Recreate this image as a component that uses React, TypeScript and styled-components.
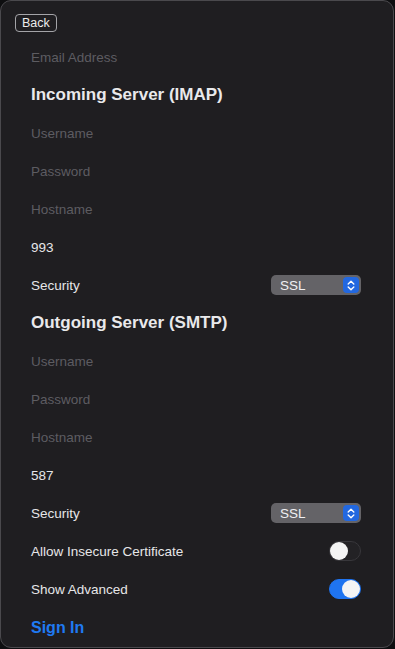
import React, { useState } from 'react'
import styled, { createGlobalStyle } from 'styled-components';

const GlobalStyle = createGlobalStyle`
    html, body {
        margin: 0;
        padding: 0;
        background: #0e0e10;
    }
    body {
        font-family: "Liberation Sans", Arial, sans-serif;
        -webkit-font-smoothing: antialiased;
    }
`;

type SecurityProps = { value: string };

const SecuritySelect: React.FC<SecurityProps> = ({ value }) => (
    <Select>
        <SelectValue>{value}</SelectValue>
        <Chevron>
            <svg width="8" height="11" viewBox="0 0 8 11" fill="none">
                <path d="M1.2 4 L4 1.3 L6.8 4" stroke="#fff" strokeWidth="1.4" strokeLinecap="round" strokeLinejoin="round" />
                <path d="M1.2 7 L4 9.7 L6.8 7" stroke="#fff" strokeWidth="1.4" strokeLinecap="round" strokeLinejoin="round" />
            </svg>
        </Chevron>
    </Select>
);

const Toggle: React.FC<{ on: boolean; onClick: () => void }> = ({ on, onClick }) => (
    <Track $on={on} onClick={onClick}>
        <Knob $on={on} />
    </Track>
);

const App: React.FC<{}> = () => {
    const [insecure, setInsecure] = useState(false);
    const [advanced, setAdvanced] = useState(true);

    return (
        <>
            <GlobalStyle />
            <Window>
                <TopBar>
                    <BackButton>Back</BackButton>
                </TopBar>
                <Row><Placeholder>Email Address</Placeholder></Row>
                <Row><Heading>Incoming Server (IMAP)</Heading></Row>
                <Row><Placeholder>Username</Placeholder></Row>
                <Row><Placeholder>Password</Placeholder></Row>
                <Row><Placeholder>Hostname</Placeholder></Row>
                <Row><Label>993</Label></Row>
                <Row>
                    <Label>Security</Label>
                    <SecuritySelect value="SSL" />
                </Row>
                <Row><Heading>Outgoing Server (SMTP)</Heading></Row>
                <Row><Placeholder>Username</Placeholder></Row>
                <Row><Placeholder>Password</Placeholder></Row>
                <Row><Placeholder>Hostname</Placeholder></Row>
                <Row><Label>587</Label></Row>
                <Row>
                    <Label>Security</Label>
                    <SecuritySelect value="SSL" />
                </Row>
                <Row>
                    <Label>Allow Insecure Certificate</Label>
                    <Toggle on={insecure} onClick={() => setInsecure(!insecure)} />
                </Row>
                <Row>
                    <Label>Show Advanced</Label>
                    <Toggle on={advanced} onClick={() => setAdvanced(!advanced)} />
                </Row>
                <Row><SignIn>Sign In</SignIn></Row>
            </Window>
        </>
    )
}

const Window = styled.div`
    box-sizing: border-box;
    width: 394px;
    height: 648px;
    background: #1f1e21;
    border: 1px solid #4a494d;
    border-radius: 11px;
    display: flex;
    flex-direction: column;
    overflow: hidden;
`;
const TopBar = styled.div`
    height: 37px;
    flex-shrink: 0;
    display: flex;
    align-items: flex-start;
    padding: 13px 0 0 14px;
    box-sizing: border-box;
`;
const BackButton = styled.button`
    box-sizing: border-box;
    height: 18px;
    padding: 0 6px;
    background: transparent;
    color: #ececec;
    border: 1px solid #a4a4a8;
    border-radius: 4px;
    font-family: "Liberation Sans", Arial, sans-serif;
    font-size: 12.5px;
    line-height: 16px;
    cursor: pointer;
`;
const Row = styled.div`
    height: 38px;
    flex-shrink: 0;
    display: flex;
    align-items: center;
    justify-content: space-between;
    padding: 0 32px 0 30px;
`;
const Placeholder = styled.div`
    font-size: 13.5px;
    color: #5d5c61;
`;
const Label = styled.div`
    font-size: 13.5px;
    color: #e6e6e8;
`;
const Heading = styled.div`
    font-size: 17px;
    font-weight: bold;
    color: #e9e9eb;
`;
const SignIn = styled.div`
    font-size: 16px;
    font-weight: bold;
    color: #1f7af2;
    padding-top: 1px;
`;
const Select = styled.div`
    box-sizing: border-box;
    width: 90px;
    height: 20px;
    background: #646367;
    border-radius: 5px;
    display: flex;
    align-items: center;
    justify-content: space-between;
    padding: 0 2px 0 9px;
`;
const SelectValue = styled.span`
    font-size: 13.5px;
    color: #f0f0f2;
`;
const Chevron = styled.span`
    width: 16px;
    height: 16px;
    border-radius: 4px;
    background: #2268e0;
    display: flex;
    align-items: center;
    justify-content: center;
`;
const Track = styled.div<{ $on: boolean }>`
    box-sizing: border-box;
    position: relative;
    width: 32px;
    height: 20px;
    border-radius: 10px;
    background: ${({ $on }) => ($on ? '#1f74f0' : '#232225')};
    border: 1px solid ${({ $on }) => ($on ? '#1f74f0' : '#38373b')};
    cursor: pointer;
`;
const Knob = styled.div<{ $on: boolean }>`
    position: absolute;
    top: 0;
    left: ${({ $on }) => ($on ? '12px' : '0')};
    width: 18px;
    height: 18px;
    border-radius: 50%;
    background: #f4f4f4;
`;

export default App
